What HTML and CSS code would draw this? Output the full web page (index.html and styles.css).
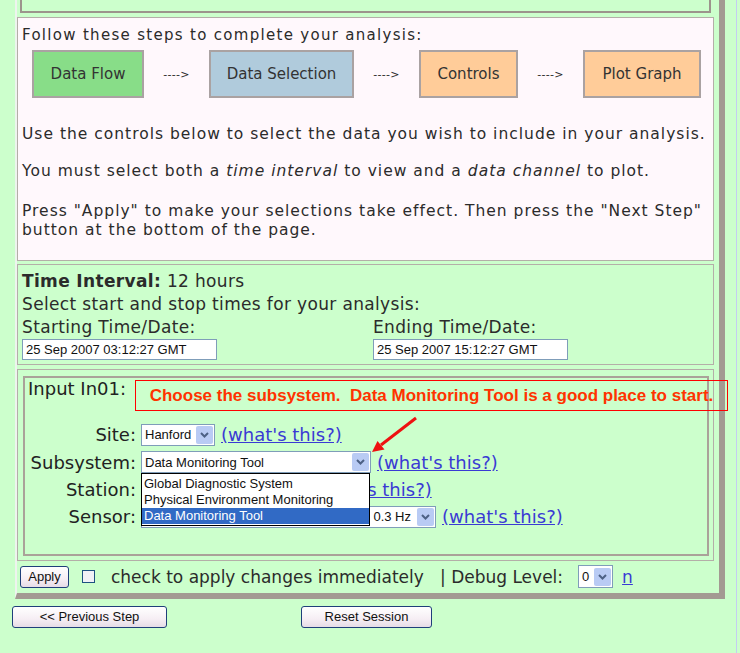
FILE: index.html
```html
<!DOCTYPE html>
<html>
<head>
<meta charset="utf-8">
<link rel="stylesheet" href="styles.css">
</head>
<body>
<div class="frame">
  <div class="topbox"></div>
  <div class="intro">
    <p class="lead">Follow these steps to complete your analysis:</p>
    <div class="steps">
      <div class="step s-flow">Data Flow</div>
      <span class="arrow">----&gt;</span>
      <div class="step s-sel">Data Selection</div>
      <span class="arrow">----&gt;</span>
      <div class="step s-ctl">Controls</div>
      <span class="arrow">----&gt;</span>
      <div class="step s-plot">Plot Graph</div>
    </div>
    <div class="copy">
      <p>Use the controls below to select the data you wish to include in your analysis.</p>
      <p>You must select both a <i>time interval</i> to view and a <i>data channel</i> to plot.</p>
      <p>Press "Apply" to make your selections take effect. Then press the "Next Step"<br>button at the bottom of the page.</p>
    </div>
  </div>
  <div class="time">
    <div><b>Time Interval:</b> 12 hours</div>
    <div>Select start and stop times for your analysis:</div>
    <div class="dates">
      <div class="date">
        <div>Starting Time/Date:</div>
        <div class="field">25 Sep 2007 03:12:27 GMT</div>
      </div>
      <div class="date">
        <div>Ending Time/Date:</div>
        <div class="field">25 Sep 2007 15:12:27 GMT</div>
      </div>
    </div>
  </div>
  <div class="inputs">
    <div class="inner">
      <div class="head">Input In01:</div>
      <div class="rows">
        <div class="lbl">Site:</div>
        <div class="ctl"><span class="sel w-site"><span class="val">Hanford</span><span class="drop"><svg width="9" height="6" viewBox="0 0 9 6"><path d="M1 1 L4.5 4.5 L8 1" fill="none" stroke="#4d6185" stroke-width="2"/></svg></span></span><a class="what">(what's this?)</a></div>
        <div class="lbl">Subsystem:</div>
        <div class="ctl"><span class="sel w-sub"><span class="val">Data Monitoring Tool</span><span class="drop"><svg width="9" height="6" viewBox="0 0 9 6"><path d="M1 1 L4.5 4.5 L8 1" fill="none" stroke="#4d6185" stroke-width="2"/></svg></span></span><a class="what">(what's this?)</a></div>
        <div class="lbl">Station:</div>
        <div class="ctl"><span class="sel w-sta"><span class="val"></span><span class="drop"><svg width="9" height="6" viewBox="0 0 9 6"><path d="M1 1 L4.5 4.5 L8 1" fill="none" stroke="#4d6185" stroke-width="2"/></svg></span></span><a class="what">(what's this?)</a></div>
        <div class="lbl">Sensor:</div>
        <div class="ctl"><span class="sel w-sen"><span class="val right">0.3 Hz</span><span class="drop"><svg width="9" height="6" viewBox="0 0 9 6"><path d="M1 1 L4.5 4.5 L8 1" fill="none" stroke="#4d6185" stroke-width="2"/></svg></span></span><a class="what">(what's this?)</a></div>
      </div>
      <div class="tip">Choose the subsystem.&nbsp; Data Monitoring Tool is a good place to start.</div>
      <svg class="pointer" width="55" height="42" viewBox="0 0 55 42"><line x1="50" y1="5" x2="15" y2="32" stroke="#ee1111" stroke-width="3"/><polygon points="6,39 18.5,36.5 11.5,28" fill="#ee1111"/></svg>
      <div class="list">
        <div class="opt">Global Diagnostic System</div>
        <div class="opt">Physical Environment Monitoring</div>
        <div class="opt on">Data Monitoring Tool</div>
      </div>
    </div>
  </div>
  <div class="applybar">
    <button class="btn apply">Apply</button>
    <span class="check"></span>
    <span class="atext">check to apply changes immediately &nbsp; | Debug Level:</span>
    <span class="sel w-dbg"><span class="val">0</span><span class="drop"><svg width="9" height="6" viewBox="0 0 9 6"><path d="M1 1 L4.5 4.5 L8 1" fill="none" stroke="#4d6185" stroke-width="2"/></svg></span></span>
    <a class="nlink">n</a>
  </div>
</div>
<div class="buttons">
  <button class="btn prev">&lt;&lt; Previous Step</button>
  <button class="btn reset">Reset Session</button>
</div>
</body>
</html>
```
FILE: styles.css
```css
html { background: #ccffcc; }
body {
  margin: 0;
  width: 736px;
  height: 653px;
  border-right: 1px solid #c4cdf2;
  background: #ccffcc;
  font-family: "DejaVu Sans", Verdana, sans-serif;
  color: #2b2b2b;
  overflow: hidden;
}
.frame {
  margin-left: 15px;
  width: 702px;
  border-left: 2px solid #eef4ee;
  border-right: 6px solid #a39a92;
  border-bottom: 6px solid #a39a92;
}
.topbox {
  margin: 0 8px 0 3px;
  height: 11px;
  border: 2px solid #9c948c;
  border-top: 0;
}
.intro {
  margin: 4px 5px 0 0;
  background: #fff8fc;
  border: 1px solid #b4aea8;
  padding: 8px 0 20px 4px;
}
.lead { margin: 0; font-size: 15px; line-height: 18px; letter-spacing: 1.3px; }
.steps {
  display: flex;
  align-items: center;
  margin: 6px 0 0 10px;
  height: 48px;
}
.step {
  box-sizing: border-box;
  height: 48px;
  border: 2px solid #aaa2a2;
  display: flex;
  align-items: center;
  justify-content: center;
  font-size: 15px;
  color: #333;
}
.s-flow { width: 112px; background: #88dd88; }
.s-sel { width: 145px; background: #b0cbdc; }
.s-ctl { width: 99px; background: #ffcc99; }
.s-plot { width: 118px; background: #ffcc99; }
.arrow { width: 65px; text-align: center; font-size: 11px; letter-spacing: 0.3px; }
.copy p { margin: 18px 0 0; font-size: 15.5px; line-height: 19px; letter-spacing: 1px; }
.copy p:first-child { margin-top: 27px; }
.copy p:last-child { margin-top: 21px; }
.time {
  margin: 3px 5px 0 0;
  border: 1px solid #b4aea8;
  padding: 5px 0 4px 4px;
  font-size: 17px;
  line-height: 23px;
  letter-spacing: 0.35px;
}
.dates { display: flex; }
.date { flex: 0 0 351px; }
.field {
  box-sizing: border-box;
  width: 195px;
  height: 21px;
  border: 1px solid #7f9db9;
  background: #fff;
  font: 13px "Liberation Sans", Arial, sans-serif;
  letter-spacing: 0;
  line-height: 19px;
  padding-left: 3px;
  color: #111;
}
.inputs {
  margin: 4px 5px 0 0;
  border: 1px solid #b4aea8;
  padding: 6px 4px 4px 5px;
}
.inner {
  position: relative;
  border: 2px solid #aaa299;
  padding: 1px 0 23px 3px;
}
.head { font-size: 18px; line-height: 20px; color: #222; }
.rows {
  display: grid;
  grid-template-columns: 108px auto;
  column-gap: 5px;
  grid-auto-rows: 27.4px;
  align-items: center;
  margin-top: 22px;
}
.lbl { text-align: right; font-size: 18px; color: #222; }
.ctl { display: flex; align-items: center; }
.sel {
  box-sizing: border-box;
  display: inline-flex;
  align-items: center;
  height: 22px;
  border: 1px solid #7f9db9;
  background: #fff;
  font: 13px "Liberation Sans", Arial, sans-serif;
  color: #111;
}
.sel .val { flex: 1; padding-left: 3px; white-space: nowrap; overflow: hidden; }
.sel .val.right { text-align: right; padding-right: 6px; }
.drop {
  width: 17px;
  height: 18px;
  margin-right: 1px;
  background: #b9cbf4;
  border-radius: 2px;
  display: flex;
  align-items: center;
  justify-content: center;
}
.w-site { width: 74px; }
.w-sub { width: 230px; }
.w-sta { width: 164px; }
.w-sen { width: 295px; }
.w-dbg { width: 35px; height: 23px; }
.what {
  margin-left: 6px;
  font-size: 18px;
  color: #3a3ad4;
  text-decoration: underline;
}
.tip {
  position: absolute;
  left: 110px;
  top: 2px;
  width: 591px;
  height: 29px;
  border: 1px solid #ff0000;
  color: #ff3300;
  font: bold 17px "Liberation Sans", Arial, sans-serif;
  line-height: 29px;
  text-align: center;
  white-space: nowrap;
}
.pointer { position: absolute; left: 341px; top: 35px; }
.list {
  position: absolute;
  left: 116px;
  top: 95px;
  box-sizing: border-box;
  width: 229px;
  height: 53px;
  border: 1px solid #000;
  background: #fff;
  padding-top: 2px;
  font: 13px "Liberation Sans", Arial, sans-serif;
  color: #111;
}
.opt { height: 16px; line-height: 16px; padding-left: 2px; white-space: nowrap; }
.opt.on { background: #316ac5; color: #fff; }
.applybar {
  display: flex;
  align-items: center;
  height: 32px;
  padding-left: 3px;
}
.btn {
  box-sizing: border-box;
  height: 22px;
  border: 1px solid #1f3f7a;
  border-radius: 3px;
  background: linear-gradient(#ffffff, #f6eef4 60%, #e6dce6);
  font: 13px "Liberation Sans", Arial, sans-serif;
  color: #111;
  padding: 0;
}
.apply { width: 49px; }
.check {
  box-sizing: border-box;
  width: 13px;
  height: 13px;
  border: 1px solid #1c5180;
  background: #f0f0f6;
  margin: 0 16px 0 13px;
}
.atext { font-size: 17px; white-space: pre; }
.w-dbg { margin-left: 15px; }
.nlink { margin-left: 9px; font-size: 17px; color: #3a3ad4; text-decoration: underline; }
.buttons {
  display: flex;
  margin: 7px 0 0 12px;
  gap: 134px;
}
.prev { width: 155px; }
.reset { width: 131px; }
```
